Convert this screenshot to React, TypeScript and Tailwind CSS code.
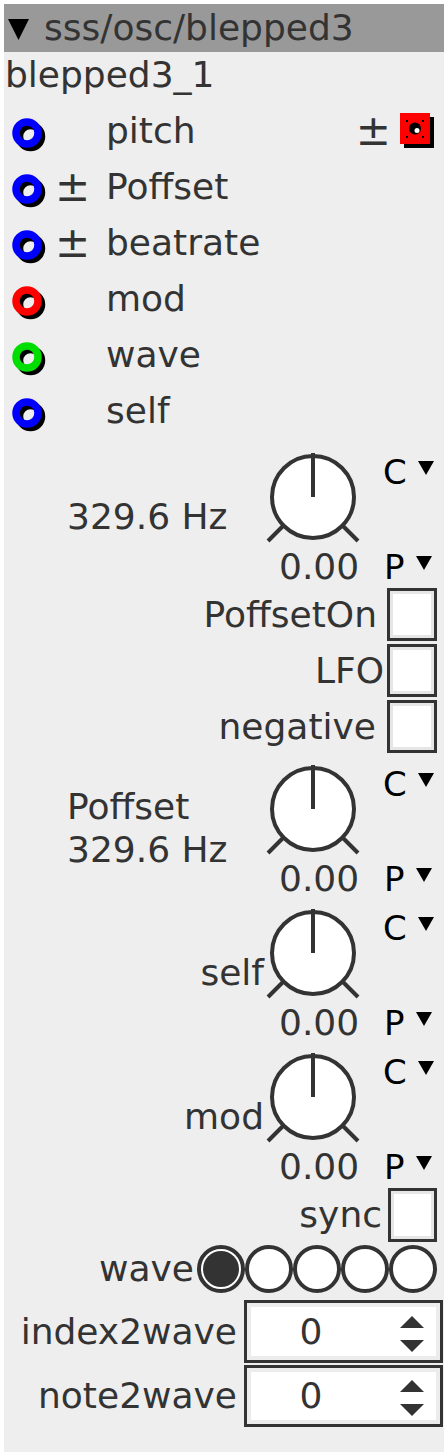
import React from "react";

const FONT = "font-['DejaVu_Sans','Liberation_Sans',sans-serif]";

const JACKS = [
  { color: "#0000ff", pm: false, label: "pitch" },
  { color: "#0000ff", pm: true, label: "Poffset" },
  { color: "#0000ff", pm: true, label: "beatrate" },
  { color: "#ff0000", pm: false, label: "mod" },
  { color: "#00dd00", pm: false, label: "wave" },
  { color: "#0000ff", pm: false, label: "self" },
];

function Jack({ color }: { color: string }) {
  return (
    <svg width="44" height="44" viewBox="0 0 44 44" className="shrink-0">
      <circle cx="22.5" cy="27.5" r="11" fill="none" stroke="#000" strokeWidth="7.5" />
      <circle cx="19" cy="24" r="11" fill="none" stroke={color} strokeWidth="7.5" />
    </svg>
  );
}

function RedJack() {
  return (
    <svg width="36" height="38" viewBox="0 0 36 38" className="shrink-0">
      <rect x="4" y="5" width="30" height="31" fill="#000" />
      <rect x="0" y="1" width="30" height="31" fill="#ff0000" />
      <circle cx="15" cy="16.5" r="6" fill="#000" />
      <circle cx="17" cy="18.5" r="2.5" fill="#fff" />
      <rect x="6" y="8" width="2" height="2" fill="#000" />
      <rect x="22" y="8" width="2" height="2" fill="#000" />
      <rect x="6" y="24" width="2" height="2" fill="#000" />
      <rect x="22" y="24" width="2" height="2" fill="#000" />
    </svg>
  );
}

function Tri() {
  return (
    <svg width="16" height="14" viewBox="0 0 16 14" className="mb-[9px] ml-[11px] shrink-0">
      <polygon points="0,0 16,0 8,14" fill="#000" />
    </svg>
  );
}

function Knob({ label, right }: { label: React.ReactNode; right?: boolean }) {
  return (
    <div className="flex h-[144px]">
      <div className={`flex-1 flex items-center ${right ? "justify-end pr-[1px]" : "pl-[63px]"}`}>
        <div className="leading-[43px]">{label}</div>
      </div>
      <div className="w-[115px] flex flex-col">
        <svg width="96" height="96" viewBox="0 0 96 96" className="mt-[6px]">
          <circle cx="48" cy="47" r="41" fill="#fff" stroke="#333" strokeWidth="4" />
          <line x1="48" y1="3" x2="48" y2="47" stroke="#333" strokeWidth="4" />
          <line x1="18" y1="76" x2="3" y2="91" stroke="#333" strokeWidth="4" />
          <line x1="78" y1="76" x2="93" y2="91" stroke="#333" strokeWidth="4" />
        </svg>
        <div className="h-[42px] leading-[42px] pl-[14px]">0.00</div>
      </div>
      <div className="w-[64px] flex flex-col justify-between text-black text-[34px]">
        <div className="h-14 flex items-center pl-[3px]">
          C<Tri />
        </div>
        <div className="h-[42px] flex items-center pl-[4px]">
          P<Tri />
        </div>
      </div>
    </div>
  );
}

function Box({ w = 50, h = 53 }: { w?: number; h?: number }) {
  return (
    <div
      className="border-[3px] border-[#333] bg-white shadow-[inset_0_0_0_3px_#e6e6e6]"
      style={{ width: w, height: h }}
    />
  );
}

function CheckRow({ label, gap }: { label: string; gap: number }) {
  return (
    <div className="flex h-14 justify-end items-start pr-[7px]">
      <div className="h-[53px] leading-[53px]" style={{ marginRight: gap }}>
        {label}
      </div>
      <Box />
    </div>
  );
}

function NumBox({ label, h }: { label: string; h: number }) {
  return (
    <div className="flex justify-end items-center pr-[1px]">
      <div className="mr-[7px]">{label}</div>
      <div
        className="w-[199px] border-[3px] border-[#333] bg-white shadow-[inset_0_0_0_4px_#ececec] flex items-center"
        style={{ height: h }}
      >
        <span className="w-[128px] text-center">0</span>
        <svg width="24" height="36" viewBox="0 0 24 36" className="ml-auto mr-[16px] mt-[4px]">
          <polygon points="0,12 12,0 24,12" fill="#333" />
          <polygon points="0,24 24,24 12,36" fill="#333" />
        </svg>
      </div>
    </div>
  );
}

export default function App() {
  return (
    <div className={`bg-white min-h-screen p-[4px] ${FONT}`}>
      <div className="w-[440px] bg-[#eeeeee] text-[#333] text-[36px] pb-[25px]">
        <div className="h-12 bg-[#999999] flex items-center">
          <svg width="22" height="22" viewBox="0 0 22 22" className="ml-[4px] mt-[3px] shrink-0">
            <polygon points="0,0 21,0 10.5,21" fill="#000" />
          </svg>
          <span className="ml-[14px] leading-[48px]">sss/osc/blepped3</span>
        </div>
        <div className="h-[51px] leading-[46px] pl-[1px]">blepped3_1</div>

        {JACKS.map((j, i) => (
          <div key={i} className="h-14 flex items-center">
            <div className="pl-[4px]">
              <Jack color={j.color} />
            </div>
            <div className="w-[54px] pl-[3px] leading-[56px] text-[42px]">{j.pm ? "±" : ""}</div>
            <div className="leading-[56px]">{j.label}</div>
            {i === 0 && (
              <div className="ml-auto flex items-center pr-[8px]">
                <span className="mr-[9px] text-[42px] leading-[56px]">±</span>
                <RedJack />
              </div>
            )}
          </div>
        ))}

        <div className="mt-[5px]">
          <Knob label="329.6 Hz" />
        </div>
        <CheckRow label="PoffsetOn" gap={10} />
        <CheckRow label="LFO" gap={3} />
        <CheckRow label="negative" gap={11} />
        <Knob
          label={
            <>
              Poffset
              <br />
              329.6 Hz
            </>
          }
        />
        <Knob label="self" right />
        <Knob label="mod" right />

        <div className="flex h-[55px] justify-end items-start pr-[7px]">
          <div className="h-[54px] leading-[54px] mr-[6px]">sync</div>
          <Box w={49} h={54} />
        </div>

        <div className="flex h-[51px] justify-end items-center pr-[7px]">
          <div className="mr-[3px]">wave</div>
          {[0, 1, 2, 3, 4].map((k) => (
            <div
              key={k}
              className="w-12 h-12 rounded-full border-[4px] border-[#333] bg-white flex items-center justify-center"
            >
              {k === 0 && <div className="w-[36px] h-[36px] rounded-full bg-[#333]" />}
            </div>
          ))}
        </div>

        <div className="mt-[6px]">
          <NumBox label="index2wave" h={63} />
        </div>
        <div className="mt-[2px]">
          <NumBox label="note2wave" h={62} />
        </div>
      </div>
    </div>
  );
}
